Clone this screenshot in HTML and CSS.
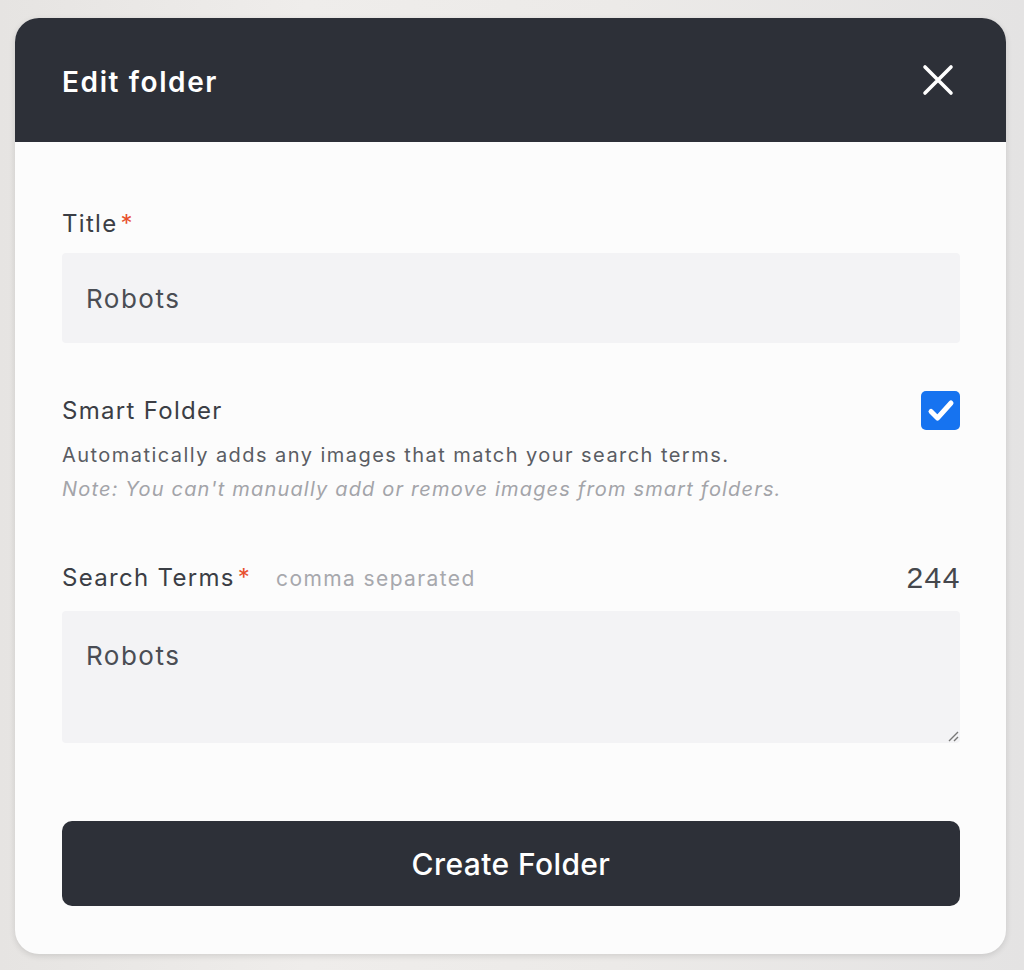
FILE: index.html
```html
<!DOCTYPE html>
<html>
<head>
<meta charset="utf-8">
<link rel="stylesheet" href="styles.css">
</head>
<body>
<div class="modal">
  <div class="modal-header">
    <h1 class="modal-title">Edit folder</h1>
    <button class="close-btn" aria-label="Close">
      <svg width="32" height="32" viewBox="0 0 32 32"><path d="M3 3 L29 29 M29 3 L3 29" stroke="#ffffff" stroke-width="3.6" stroke-linecap="round"/></svg>
    </button>
  </div>
  <div class="modal-body">
    <div class="field">
      <label class="label">Title<span class="req">*</span></label>
      <div class="input">Robots</div>
    </div>
    <div class="smart">
      <div class="smart-row">
        <span class="label">Smart Folder</span>
        <span class="checkbox">
          <svg width="28" height="26" viewBox="0 0 28 26"><path d="M4 13.5 L10.5 20 L24 5" stroke="#ffffff" stroke-width="5" fill="none" stroke-linecap="round" stroke-linejoin="round"/></svg>
        </span>
      </div>
      <p class="desc">Automatically adds any images that match your search terms.</p>
      <p class="note">Note: You can't manually add or remove images from smart folders.</p>
    </div>
    <div class="field search">
      <div class="label-row">
        <label class="label">Search Terms<span class="req">*</span><span class="hint">comma separated</span></label>
        <span class="count">244</span>
      </div>
      <div class="textarea">Robots
        <svg class="grip" width="14" height="14" viewBox="0 0 14 14"><path d="M13 4 L4 13 M13 9 L9 13" stroke="#777" stroke-width="1.4"/></svg>
      </div>
    </div>
    <button class="submit">Create Folder</button>
  </div>
</div>
</body>
</html>
```

FILE: styles.css
```css
* { box-sizing: border-box; }
html, body { margin: 0; padding: 0; }
body {
  width: 1024px;
  height: 970px;
  overflow: hidden;
  font-family: "Inter", "DejaVu Sans", sans-serif;
  background: linear-gradient(90deg, #e6e4e2 0%, #efedeb 30%, #eceae8 60%, #e4e3e3 100%);
  padding: 18px 18px 0 15px;
}
.modal {
  width: 991px;
  height: 936px;
  background: #fcfcfc;
  border-radius: 24px;
  overflow: hidden;
  box-shadow: 0 2px 6px rgba(0,0,0,0.12);
  display: flex;
  flex-direction: column;
}
.modal-header {
  height: 124px;
  background: #2d3038;
  display: flex;
  align-items: center;
  justify-content: space-between;
  padding: 0 52px 0 47px;
}
.modal-title {
  margin: 4px 0 0;
  color: #ffffff;
  font-size: 28px;
  font-weight: 600;
  letter-spacing: 1.6px;
}
.close-btn {
  background: none;
  border: 0;
  padding: 0;
  width: 32px;
  height: 32px;
  display: flex;
}
.modal-body {
  padding: 67px 46px 0 47px;
  display: flex;
  flex-direction: column;
}
.field { display: flex; flex-direction: column; }
.label {
  font-size: 24px;
  line-height: 30px;
  color: #3b3e45;
  font-weight: 400;
  letter-spacing: 1.3px;
}
.req { color: #e8502d; margin-left: 3px; }
.input {
  margin-top: 14px;
  height: 90px;
  background: #f3f3f5;
  border-radius: 4px;
  padding: 0 24px;
  display: flex;
  align-items: center;
  font-size: 26px;
  letter-spacing: 1.5px;
  color: #4a4d54;
}
.smart { margin-top: 48px; }
.smart-row {
  display: flex;
  justify-content: space-between;
  align-items: center;
  height: 39px;
}
.checkbox {
  width: 39px;
  height: 39px;
  background: #1673f0;
  border-radius: 5px;
  display: flex;
  align-items: center;
  justify-content: center;
}
.desc {
  margin: 8px 0 0;
  font-size: 20px;
  line-height: 34px;
  color: #5a5d63;
  letter-spacing: 1.45px;
}
.note {
  margin: 0;
  font-size: 20px;
  line-height: 34px;
  color: #a3a4a9;
  font-style: italic;
  letter-spacing: 1.17px;
}
.search { margin-top: 55px; }
.label-row {
  display: flex;
  justify-content: space-between;
  align-items: center;
}
.hint {
  font-size: 21px;
  color: #a7a8ad;
  margin-left: 25px;
  letter-spacing: 1.4px;
}
.count {
  font-family: "Liberation Sans", Arial, sans-serif;
  font-size: 30px;
  color: #45474c;
  letter-spacing: 1.5px;
  margin-right: -1px;
}
.textarea {
  position: relative;
  margin-top: 16px;
  height: 132px;
  background: #f3f3f5;
  border-radius: 4px;
  padding: 29px 24px 0;
  font-size: 26px;
  letter-spacing: 1.5px;
  color: #4a4d54;
}
.grip { position: absolute; right: 1px; bottom: 1px; }
.submit {
  margin-top: 78px;
  height: 85px;
  border: 0;
  border-radius: 10px;
  background: #2d3038;
  color: #ffffff;
  font-family: "Inter", "DejaVu Sans", sans-serif;
  font-size: 30px;
  font-weight: 500;
  letter-spacing: 0.4px;
}
```
